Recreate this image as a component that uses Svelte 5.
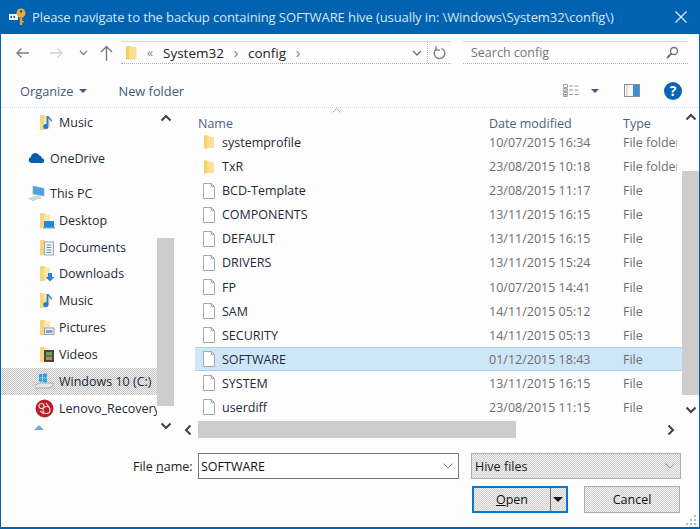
<script>
  const files = [
    { name: "systemprofile", date: "10/07/2015 16:34", type: "File folder", folder: true },
    { name: "TxR", date: "23/08/2015 10:18", type: "File folder", folder: true },
    { name: "BCD-Template", date: "23/08/2015 11:17", type: "File" },
    { name: "COMPONENTS", date: "13/11/2015 16:15", type: "File" },
    { name: "DEFAULT", date: "13/11/2015 16:15", type: "File" },
    { name: "DRIVERS", date: "13/11/2015 15:24", type: "File" },
    { name: "FP", date: "10/07/2015 14:41", type: "File" },
    { name: "SAM", date: "14/11/2015 05:12", type: "File" },
    { name: "SECURITY", date: "14/11/2015 05:13", type: "File" },
    { name: "SOFTWARE", date: "01/12/2015 18:43", type: "File", selected: true },
    { name: "SYSTEM", date: "13/11/2015 16:15", type: "File" },
    { name: "userdiff", date: "23/08/2015 11:15", type: "File" },
  ];

  const places = [
    { label: "Desktop", kind: "desktop" },
    { label: "Documents", kind: "documents" },
    { label: "Downloads", kind: "downloads" },
    { label: "Music", kind: "music" },
    { label: "Pictures", kind: "pictures" },
    { label: "Videos", kind: "videos" },
  ];
</script>

{#snippet placeIcon(kind)}
  <svg class="place-icon" width="16" height="17" viewBox="0 0 16 17">
    <path d="M1 1h4l2 1.500v13l-6 1z" fill="#f6d67e" />
    <path d="M5 2.500h6v12h-6z" fill="#fbe7ad" />
    {#if kind === "music"}
      <path d="M8.500 2v10" stroke="#1b7fd6" stroke-width="1.800" fill="none" />
      <circle cx="6.800" cy="12.500" r="2.600" fill="#1b7fd6" />
      <path d="M9 2.500c1 2 3.500 2.500 3.500 5" stroke="#1b7fd6" stroke-width="1.300" fill="none" />
    {:else if kind === "desktop"}
      <rect x="5" y="9" width="10" height="6" fill="#1c8ae0" />
      <rect x="4" y="15" width="12" height="1.500" fill="#7e9cb5" />
    {:else if kind === "documents"}
      <rect x="5.500" y="3" width="9" height="13" fill="#f6f8fb" stroke="#98a4b0" />
      <path d="M7.500 6h5M7.500 8.500h5M7.500 11h5M7.500 13.500h5" stroke="#5b8fbd" />
    {:else if kind === "downloads"}
      <path d="M9 8h4v4h2.500l-4.500 4.500-4.500-4.500h2.500z" fill="#2a85d8" />
    {:else if kind === "pictures"}
      <rect x="5.500" y="9" width="9.500" height="6.500" fill="#eef3f8" stroke="#8fa1b1" />
      <rect x="7" y="11" width="6.500" height="3" fill="#7ea3c4" />
    {:else if kind === "videos"}
      <rect x="5" y="4" width="10" height="12" fill="#3f4a44" />
      <rect x="7" y="6" width="6" height="3.500" fill="#6ea05e" />
      <rect x="7" y="10.500" width="6" height="3.500" fill="#c28a3c" />
    {/if}
  </svg>
{/snippet}

{#snippet folderIcon()}
  <svg class="file-icon" width="16" height="14" viewBox="0 0 16 14">
    <path d="M3 0.500h4l2 1.500h4v11h-10z" fill="#fbdf92" />
    <path d="M3 0.500h3v13h-3z" fill="#f6d069" />
  </svg>
{/snippet}

{#snippet pageIcon()}
  <svg class="file-icon" width="16" height="16" viewBox="0 0 16 16">
    <path d="M2.500 0.500h8l3 3v12h-11z" fill="#fff" stroke="#a8a8a8" />
    <path d="M10.500 0.500v3h3" fill="none" stroke="#a8a8a8" />
  </svg>
{/snippet}

{#snippet chevron(dir, color = "#404040", width = 2)}
  <svg class="chev chev-{dir}" width="12" height="8" viewBox="0 0 12 8">
    <path d="M1.500 6.500 6 2l4.500 4.500" fill="none" stroke={color} stroke-width={width} />
  </svg>
{/snippet}

<div class="window">
  <header class="titlebar">
    <svg class="key" width="24" height="26" viewBox="0 0 24 26">
      <rect x="1" y="10" width="9" height="6" fill="#f0f4f8" />
      <path d="M2.500 12h1.500v2h-1.500zM5.500 12h1.500v2h-1.500z" fill="#30445c" />
      <circle cx="13" cy="9" r="4.500" fill="#f0a934" />
      <circle cx="13" cy="7.500" r="1.300" fill="#0063b1" />
      <path d="M11.800 13h2.400v8h-2.400z" fill="#e89c2c" />
      <path d="M14 17h2v1.500h-2z" fill="#e89c2c" />
    </svg>
    <span class="title">Please navigate to the backup containing SOFTWARE hive (usually in: \Windows\System32\config\)</span>
    <svg class="close" width="12" height="12" viewBox="0 0 12 12">
      <path d="M.5.500l11 11M11.500.500l-11 11" stroke="#e4edf5" stroke-width="1.200" />
    </svg>
  </header>

  <div class="navbar">
    <div class="nav-buttons">
      <svg width="15" height="12" viewBox="0 0 15 12"><path d="M14 6H2M6.500 1.500 2 6l4.500 4.500" fill="none" stroke="#7a7a7a" stroke-width="1.300" /></svg>
      <svg class="fwd" width="15" height="12" viewBox="0 0 15 12"><path d="M1 6h12M8.500 1.500 13 6l-4.500 4.500" fill="none" stroke="#d4d4d4" stroke-width="1.300" /></svg>
      <svg class="more" width="9" height="6" viewBox="0 0 9 6"><path d="M1 1l3.500 3.500L8 1" fill="none" stroke="#808080" stroke-width="1.300" /></svg>
      <svg class="up" width="13" height="16" viewBox="0 0 13 16"><path d="M6.500 16V2M1 7l5.500-5.500L12 7" fill="none" stroke="#7a7a7a" stroke-width="1.400" /></svg>
    </div>
    <div class="address">
      <svg class="addr-folder" width="11" height="15" viewBox="0 0 11 15"><path d="M0 1h5l1 1h4.500v12.500h-10.500z" fill="#fbdd8e" /><path d="M0 1h3v13.500h-3z" fill="#f5cf66" /></svg>
      <span class="crumb-more">«</span>
      <span class="crumb">System32</span>
      <span class="crumb-sep">›</span>
      <span class="crumb">config</span>
      <span class="crumb-sep">›</span>
      <span class="spacer"></span>
      <svg class="addr-down" width="10" height="6" viewBox="0 0 10 6"><path d="M1 1l4 4 4-4" fill="none" stroke="#707070" stroke-width="1.300" /></svg>
      <span class="addr-div"></span>
      <svg class="refresh" width="13" height="14" viewBox="0 0 13 14"><path d="M4 2.600a5.300 5.300 0 1 0 4.400-.3" fill="none" stroke="#808080" stroke-width="1.400" /><path d="M3 0v4.200h4" fill="none" stroke="#808080" stroke-width="1.200" /></svg>
    </div>
    <div class="search">
      <span>Search config</span>
      <svg width="13" height="13" viewBox="0 0 13 13"><circle cx="8" cy="5" r="3.500" fill="none" stroke="#6f6f6f" stroke-width="1.300" /><path d="M5.500 7.500 1 12" stroke="#6f6f6f" stroke-width="1.800" /></svg>
    </div>
  </div>

  <div class="toolbar">
    <span class="tool organize">Organize</span>
    <span class="caret"></span>
    <span class="tool newfolder">New folder</span>
    <span class="spacer"></span>
    <svg class="views" width="17" height="13" viewBox="0 0 17 13">
      <path d="M.5.500h4v3h-4zM.5 4.500h4v3h-4zM.5 8.500h4v4h-4z" fill="#f4f4f4" stroke="#a4a4a4" />
      <rect x="1.500" y="5.500" width="2" height="1.500" fill="#d8b23f" />
      <rect x="1.500" y="10" width="2" height="1.500" fill="#c8503a" />
      <path d="M6 2h4M11.500 2h4M6 6h4M11.500 6h4M6 10.500h4M11.500 10.500h4" stroke="#9a9a9a" />
    </svg>
    <span class="caret view-caret"></span>
    <svg class="pane" width="16" height="13" viewBox="0 0 16 13">
      <rect x=".5" y=".5" width="15" height="12" fill="#f6f6f6" stroke="#8d8d8d" />
      <rect x="9" y="1" width="6" height="11" fill="#3c8fdc" />
      <path d="M3 1v11" stroke="#c5c5c5" />
    </svg>
    <span class="help">?</span>
  </div>

  <div class="main">
    <nav class="sidebar">
      <div class="side-list">
        <div class="side-row indent">
          {@render placeIcon("music")}
          <span>Music</span>
        </div>
        <div class="side-row top onedrive">
          <svg class="place-icon" width="17" height="12" viewBox="0 0 17 12"><path d="M3.500 11a3 3 0 0 1-.6-5.900 4.400 4.400 0 0 1 8.200-1.800 3.500 3.500 0 0 1 2.900 3 2.400 2.400 0 0 1 .5 4.700z" fill="#0f5cad" /></svg>
          <span>OneDrive</span>
        </div>
        <div class="side-row top2 pc">
          <svg class="place-icon" width="17" height="17" viewBox="0 0 17 17"><path d="M5 1l11 2.500v7.500l-11-2z" fill="#4aa3e0" stroke="#8fa8ba" stroke-width=".6" /><path d="M1 13.500l8-2.500 4 1.500-8 3z" fill="#d9dde0" stroke="#b0b5b9" stroke-width=".6" /></svg>
          <span>This PC</span>
        </div>
        {#each places as place}
          <div class="side-row indent">
            {@render placeIcon(place.kind)}
            <span>{place.label}</span>
          </div>
        {/each}
        <div class="side-row indent drive active">
          <svg class="place-icon" width="19" height="17" viewBox="0 0 19 17">
            <path d="M4 1.500l3-.5v3.500h-3zM7.800.9l4-.6v4.200h-4zM4 5.300h3v3.500l-3-.5zM7.800 5.300h4v4.200l-4-.6z" fill="#1f9be8" />
            <path d="M0 12l5-2h13v2.500l-3 2.500h-15z" fill="#e6e6e6" stroke="#8b8b8b" stroke-width=".6" />
          </svg>
          <span>Windows 10 (C:)</span>
        </div>
        <div class="side-row indent drive">
          <svg class="place-icon" width="19" height="19" viewBox="0 0 19 19">
            <circle cx="9.500" cy="9.500" r="9" fill="#b81f2a" />
            <circle cx="6.500" cy="7" r="2.500" fill="none" stroke="#f3d3d3" stroke-width="1.200" />
            <circle cx="11.500" cy="11" r="3.500" fill="none" stroke="#f3d3d3" stroke-width="1.200" />
            <path d="M5 12l4 3M11 4l3 4" stroke="#f3d3d3" stroke-width="1.200" />
          </svg>
          <span>Lenovo_Recovery (D:)</span>
        </div>
        <svg class="net-icon" width="14" height="6" viewBox="0 0 14 6"><path d="M2 6l5-5 5 5z" fill="#7fa9cc" /></svg>
      </div>
      <div class="side-scroll">
        {@render chevron("up", "#404040", 2)}
        <div class="side-thumb"></div>
        {@render chevron("down", "#404040", 2)}
      </div>
    </nav>

    <div class="content">
      <div class="content-left">
        <div class="listing">
          <div class="sort-mark">
            <svg width="9" height="5" viewBox="0 0 9 5"><path d="M.500 4.500 4.500.500l4 4" fill="none" stroke="#b5b5b5" /></svg>
          </div>
          <div class="head">
            <span class="col-name">Name</span>
            <span class="col-date">Date modified</span>
            <span class="col-type">Type</span>
          </div>
          {#each files as file}
            <div class="row" class:selected={file.selected}>
              <span class="col-icon">
                {#if file.folder}
                  {@render folderIcon()}
                {:else}
                  {@render pageIcon()}
                {/if}
              </span>
              <span class="cell-name">{file.name}</span>
              <span class="cell-date">{file.date}</span>
              <span class="cell-type">{file.type}</span>
            </div>
          {/each}
        </div>
        <div class="hscroll">
          {@render chevron("left", "#404040", 2)}
          <div class="hthumb"></div>
          <span class="spacer"></span>
          {@render chevron("right", "#404040", 2)}
        </div>
      </div>
      <div class="vscroll">
        {@render chevron("up", "#404040", 2)}
        <div class="vthumb"></div>
        {@render chevron("down", "#404040", 2)}
      </div>
    </div>
  </div>

  <footer class="footer">
    <div class="file-row">
      <span class="file-label">File <u>n</u>ame:</span>
      <div class="file-input">
        <span>SOFTWARE</span>
        <svg width="10" height="6" viewBox="0 0 10 6"><path d="M.500.500 5 5 9.500.500" fill="none" stroke="#8a8a8a" /></svg>
      </div>
      <div class="file-filter">
        <span>Hive files</span>
        <svg width="10" height="6" viewBox="0 0 10 6"><path d="M.500.500 5 5 9.500.500" fill="none" stroke="#8a8a8a" /></svg>
      </div>
    </div>
    <div class="button-row">
      <div class="btn open">
        <span class="open-label"><u>O</u>pen</span>
        <span class="open-split"></span>
        <span class="open-caret"></span>
      </div>
      <div class="btn cancel">Cancel</div>
    </div>
    <svg class="grip" width="11" height="11" viewBox="0 0 11 11">
      <path d="M8 0h2v2h-2zM8 4h2v2h-2zM4 4h2v2h-2zM8 8h2v2h-2zM4 8h2v2h-2zM0 8h2v2h-2z" fill="#b8b8b8" />
    </svg>
  </footer>
</div>

<style>
  :global(body) {
    margin: 0;
    background: #fff;
  }

  .window {
    position: relative;
    width: 700px;
    height: 529px;
    box-sizing: border-box;
    border: solid #0063b1;
    border-width: 0 1px 2px 1px;
    background: #fdfdfd;
    display: flex;
    flex-direction: column;
    font-family: "Open Sans", "Noto Sans", sans-serif;
    font-size: 12.5px;
    color: #1e2a38;
    overflow: hidden;
  }

  .spacer {
    flex: 1;
  }

  .titlebar {
    height: 34px;
    flex: none;
    background: #0063b1;
    display: flex;
    align-items: center;
    color: #d9e6f2;
    font-size: 13px;
  }

  .key {
    margin: 0 0 0 7px;
    flex: none;
  }

  .title {
    white-space: nowrap;
    width: 643px;
    flex: none;
    letter-spacing: -0.09px;
  }

  .navbar {
    height: 30px;
    flex: none;
    display: flex;
    align-items: stretch;
    margin-top: 7px;
    box-sizing: border-box;
  }

  .nav-buttons {
    width: 120px;
    flex: none;
    display: flex;
    align-items: center;
    padding-left: 14px;
    box-sizing: border-box;
    height: 23px;
  }

  .fwd {
    margin-left: 19px;
  }

  .more {
    margin-left: 15px;
  }

  .up {
    margin-left: 12px;
  }

  .address,
  .search {
    height: 23px;
    box-sizing: border-box;
    border-top: 1px solid #d9d9d9;
    border-bottom: 1px dotted #b4b4b4;
    display: flex;
    align-items: center;
  }

  .address {
    width: 330px;
    flex: none;
    font-size: 13.5px;
    color: #222;
  }

  .addr-folder {
    margin-left: 5px;
  }

  .crumb-more {
    margin-left: 10px;
    width: 16px;
    color: #888;
    font-size: 12px;
  }

  .crumb-sep {
    color: #777;
    font-size: 15px;
    width: 24px;
    text-align: center;
    line-height: 1;
  }

  .addr-down {
    margin-right: 5px;
  }

  .addr-div {
    width: 0;
    height: 21px;
    border-left: 1px dotted #b4b4b4;
  }

  .refresh {
    margin: 0 5px 0 5px;
  }

  .search {
    width: 225px;
    margin-left: 12px;
    padding: 0 9px 0 8px;
    justify-content: space-between;
    color: #777;
  }

  .toolbar {
    height: 34px;
    flex: none;
    margin-top: 3px;
    box-sizing: border-box;
    display: flex;
    align-items: center;
    border-bottom: 1px dotted #c5dcee;
    color: #3f5a78;
    font-size: 12.800px;
  }

  .organize {
    margin-left: 19px;
  }

  .caret {
    width: 0;
    height: 0;
    border: 4px solid transparent;
    border-top: 4px solid #3f5a78;
    border-bottom: 0;
    margin-left: 5px;
  }

  .newfolder {
    margin-left: 32px;
  }

  .view-caret {
    margin-left: 11px;
  }

  .pane {
    margin-left: 25px;
  }

  .help {
    width: 18px;
    height: 18px;
    margin: 0 17px 0 24px;
    border-radius: 50%;
    background: #0a64b4;
    color: #fff;
    font-weight: 700;
    font-size: 14px;
    line-height: 18px;
    text-align: center;
  }

  .main {
    height: 330px;
    flex: none;
    display: flex;
  }

  .sidebar {
    width: 173px;
    flex: none;
    display: flex;
  }

  .side-list {
    width: 156px;
    flex: none;
    overflow: hidden;
    color: #1e2a38;
    padding-top: 1px;
    box-sizing: border-box;
  }

  .side-row {
    height: 26.900px;
    display: flex;
    align-items: center;
    white-space: nowrap;
    padding-left: 27px;
  }

  .side-row.indent {
    padding-left: 38px;
  }

  .side-row.top {
    margin-top: 9px;
  }

  .side-row.top2 {
    margin-top: 8px;
  }

  .side-row .place-icon {
    margin-right: 5px;
    flex: none;
  }

  .side-row.indent .place-icon {
    margin-right: 4px;
  }

  .side-row.drive {
    padding-left: 34px;
  }

  .side-row.drive .place-icon {
    margin-right: 5px;
  }

  .side-row.active {
    background: repeating-conic-gradient(#c4c4c4 0 25%, #f2f2f2 0 50%) 0 0 / 2px 2px;
  }

  .net-icon {
    display: block;
    margin: 2px 0 0 31px;
  }

  .side-scroll {
    width: 17px;
    flex: none;
    display: flex;
    flex-direction: column;
    align-items: center;
    padding-top: 6px;
    box-sizing: border-box;
  }

  .side-thumb {
    width: 17px;
    height: 168px;
    background: #cdcdcd;
    margin-top: 116px;
    margin-bottom: 16px;
    flex: none;
  }

  .chev {
    display: block;
    flex: none;
  }

  .chev-down {
    transform: rotate(180deg);
  }

  .chev-left {
    transform: rotate(-90deg);
  }

  .chev-right {
    transform: rotate(90deg);
  }

  .content {
    flex: 1;
    display: flex;
    min-width: 0;
  }

  .content-left {
    flex: 1;
    min-width: 0;
    display: flex;
    flex-direction: column;
  }

  .listing {
    height: 313px;
    flex: none;
    overflow: hidden;
    position: relative;
    padding-left: 21px;
  }

  .sort-mark {
    position: absolute;
    left: 158px;
    top: 0;
    line-height: 0;
  }

  .head {
    height: 14px;
    margin-top: 8px;
    margin-bottom: 0.400px;
    display: flex;
    align-items: center;
    color: #4f6378;
  }

  .col-name {
    width: 291px;
    margin-left: 3px;
    flex: none;
  }

  .col-date {
    width: 134px;
    flex: none;
  }

  .row {
    height: 24.100px;
    box-sizing: border-box;
    display: flex;
    align-items: center;
    white-space: nowrap;
    border: 1px solid transparent;
    border-width: 1px 0;
  }

  .row.selected {
    background: #cde6f8;
    border-color: #a8d4f2;
  }

  .col-icon {
    width: 27px;
    flex: none;
    display: flex;
    align-items: center;
    padding-left: 6px;
    box-sizing: border-box;
  }

  .cell-name {
    width: 267px;
    flex: none;
    color: #1e2a38;
  }

  .cell-date {
    width: 134px;
    flex: none;
    color: #6d6d6d;
  }

  .cell-type {
    flex: 1;
    min-width: 0;
    overflow: hidden;
    margin-right: 5px;
    color: #6d6d6d;
  }

  .hscroll {
    height: 17px;
    flex: none;
    display: flex;
    align-items: center;
  }

  .hscroll :global(svg:first-child) {
    margin-left: 8px;
  }

  .hthumb {
    width: 318px;
    height: 17px;
    background: #cdcdcd;
    margin-left: 4px;
  }

  .hscroll :global(.chev-right) {
    margin-right: 5px;
  }

  .vscroll {
    width: 17px;
    flex: none;
    display: flex;
    flex-direction: column;
    align-items: center;
    padding-top: 5px;
    box-sizing: border-box;
  }

  .vthumb {
    width: 17px;
    height: 224px;
    background: #cdcdcd;
    margin-top: 50px;
    margin-bottom: 11px;
    flex: none;
  }

  .footer {
    flex: 1;
    position: relative;
    box-sizing: border-box;
    padding-top: 15px;
  }

  .file-row {
    display: flex;
    align-items: center;
    height: 26px;
  }

  .file-label {
    margin-left: 132px;
    width: 65px;
    flex: none;
    color: #222;
  }

  .file-input,
  .file-filter {
    height: 26px;
    box-sizing: border-box;
    display: flex;
    align-items: center;
    justify-content: space-between;
    flex: none;
  }

  .file-input {
    width: 261px;
    border: 1px solid #7a7a7a;
    padding: 0 5px 0 2px;
    background: #fff;
    color: #111;
  }

  .file-filter {
    width: 210px;
    margin-left: 12px;
    border: 1px solid #adadad;
    padding: 0 5px 0 3px;
    background: repeating-conic-gradient(#cfcfcf 0 25%, #f4f4f4 0 50%) 0 0 / 2px 2px;
    color: #222;
  }

  .button-row {
    display: flex;
    margin: 7px 0 0 471px;
    gap: 16px;
  }

  .btn {
    width: 96px;
    height: 27px;
    box-sizing: border-box;
    display: flex;
    align-items: center;
    justify-content: center;
    color: #111;
    background: repeating-conic-gradient(#cfcfcf 0 25%, #f4f4f4 0 50%) 0 0 / 2px 2px;
  }

  .open {
    border: 2px solid #0078d7;
    justify-content: flex-start;
  }

  .open-label {
    width: 76px;
    text-align: center;
  }

  .open-split {
    width: 1px;
    height: 23px;
    background: #6f6f6f;
  }

  .open-caret {
    width: 0;
    height: 0;
    border: 5px solid transparent;
    border-top: 5px solid #111;
    border-bottom: 0;
    margin-left: 2px;
  }

  .cancel {
    border: 1px solid #adadad;
  }

  .grip {
    position: absolute;
    right: 2px;
    bottom: 1px;
  }
</style>
